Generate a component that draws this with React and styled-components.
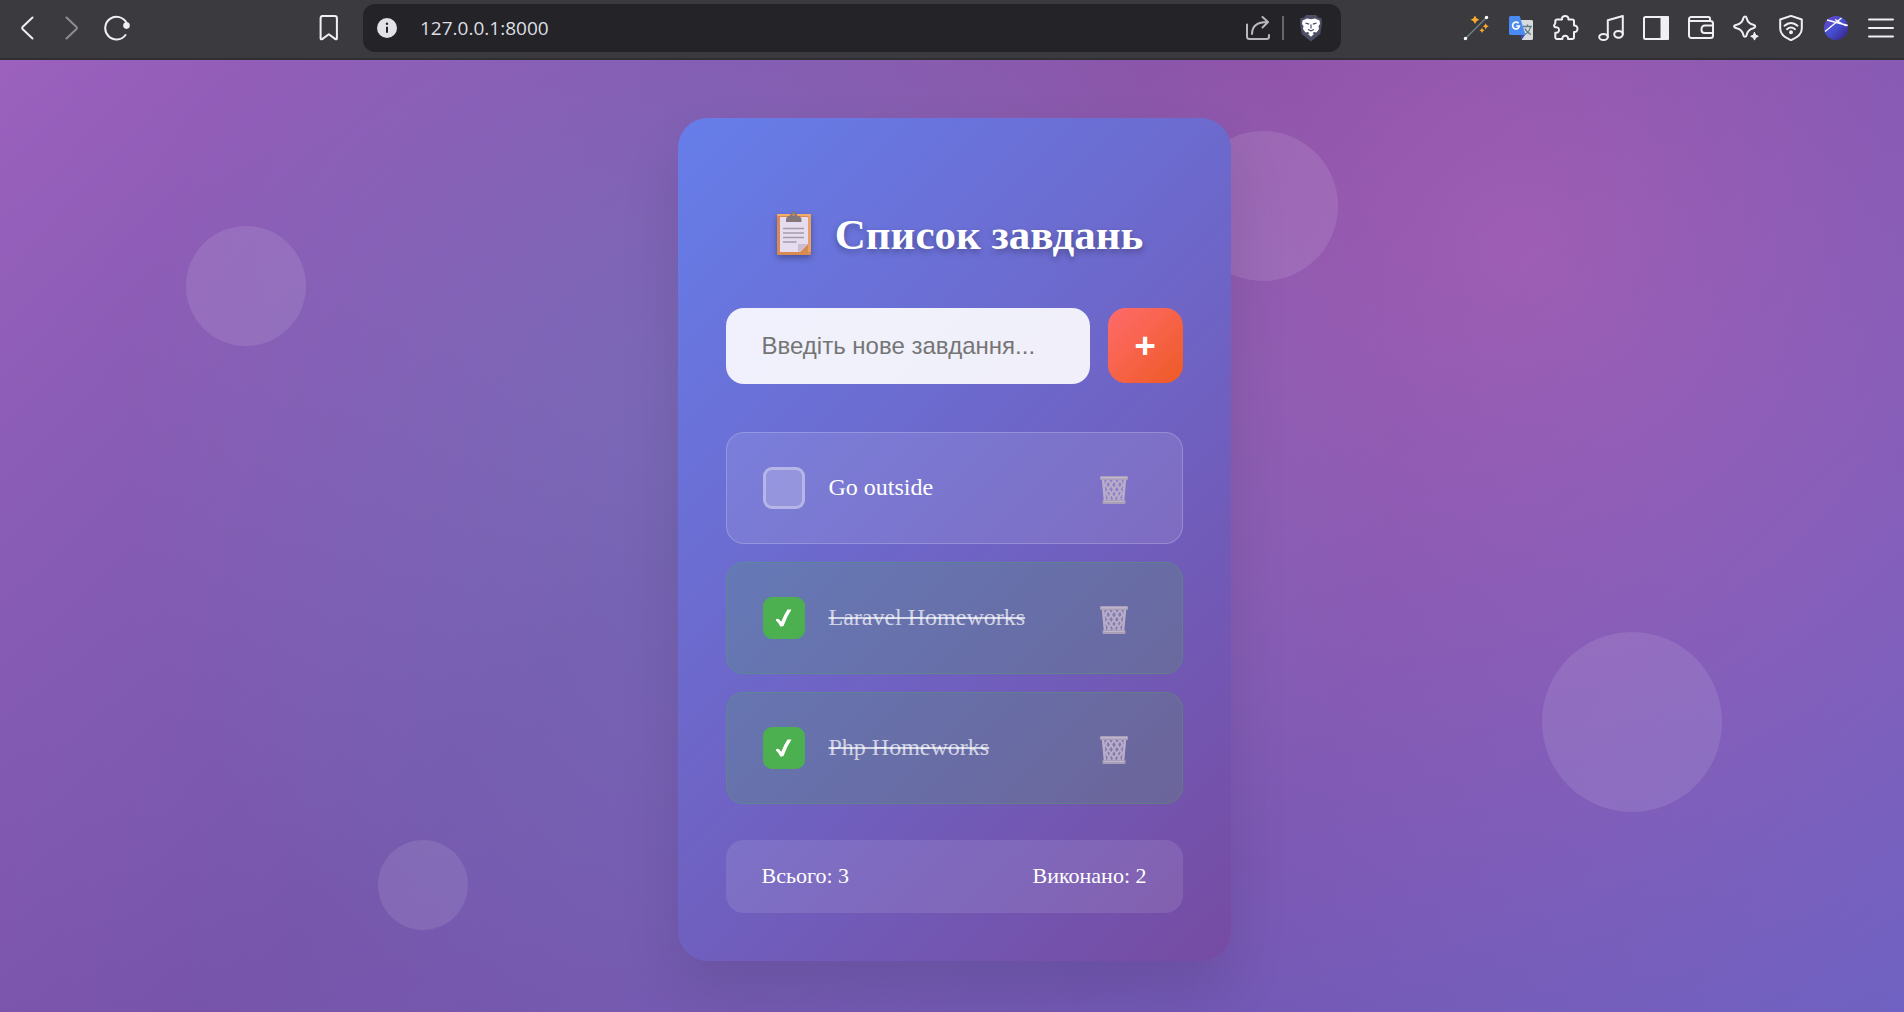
import React, { useState } from "react";
import styled, { createGlobalStyle, css } from "styled-components";

const GlobalStyle = createGlobalStyle`
  *, *::before, *::after { box-sizing: border-box; }
  body {
    margin: 0;
    font-family: "Liberation Serif", "Times New Roman", serif;
    background: #764ba2;
  }
`;

const Window = styled.div`
  display: flex;
  flex-direction: column;
  min-height: 100vh;
`;

/* ---------- browser bar ---------- */

const Toolbar = styled.header`
  display: flex;
  align-items: center;
  height: 60px;
  padding: 0 1px 2px 4px;
  background: #3b3a3f;
  border-bottom: 2px solid #2f2e32;
  position: relative;
  z-index: 1;
`;

const ToolGroup = styled.div`
  display: flex;
  align-items: center;
`;

const ToolButton = styled.button`
  display: flex;
  align-items: center;
  justify-content: center;
  width: 45px;
  height: 48px;
  padding: 0;
  border: 0;
  background: none;
  color: #f0f0f4;
  opacity: ${(p) => (p.disabled ? 0.45 : 1)};
`;

const BookmarkSlot = styled(ToolGroup)`
  margin: 0 12px 0 167px;
`;

const AddressBar = styled.div`
  flex: 1;
  min-width: 0;
  display: flex;
  align-items: center;
  height: 48px;
  margin-right: 112px;
  padding: 0 8px 0 14px;
  border-radius: 12px;
  background: #242428;
`;

const AddressInput = styled.input`
  flex: 1;
  min-width: 0;
  margin-left: 23px;
  padding: 0;
  border: 0;
  outline: 0;
  background: none;
  color: #dedee2;
  font: 19px/26px "Open Sans", "Noto Sans", sans-serif;
`;

const Divider = styled.span`
  width: 2px;
  height: 24px;
  margin: 0 4px 0 2px;
  background: #66666b;
`;

/* ---------- page ---------- */

const Stage = styled.main`
  position: relative;
  flex: 1;
  display: flex;
  justify-content: center;
  align-items: flex-start;
  padding: 58px 20px 51px 24px;
  overflow: hidden;
  background:
    radial-gradient(circle at 20% 80%, rgba(120, 119, 198, 0.3) 0%, transparent 50%),
    radial-gradient(circle at 80% 20%, rgba(255, 119, 198, 0.3) 0%, transparent 50%),
    radial-gradient(circle at 40% 40%, rgba(120, 219, 255, 0.2) 0%, transparent 50%),
    linear-gradient(-45deg, #667eea, #764ba2, #f093fb, #f5576c) 88% 50% / 400% 400%;
`;

const Bubble = styled.span`
  position: absolute;
  left: ${(p) => p.$left};
  top: ${(p) => p.$top}px;
  width: ${(p) => p.$size}px;
  height: ${(p) => p.$size}px;
  border-radius: 50%;
  background: rgba(255, 255, 255, 0.1);
`;

const Card = styled.section`
  position: relative;
  width: 100%;
  max-width: 553px;
  padding: 48px;
  border-radius: 30px;
  background: linear-gradient(135deg, #667eea 0%, #764ba2 100%);
  box-shadow: 0 30px 60px rgba(0, 0, 0, 0.1);
`;

const Title = styled.h1`
  display: flex;
  align-items: center;
  justify-content: center;
  gap: 24px;
  margin: 42px 0 46px;
  color: #fff;
  font-size: 43px;
  line-height: 54px;
  text-shadow: 0 3px 6px rgba(0, 0, 0, 0.3);

  svg {
    margin: 0 0 4px 12px;
    filter: drop-shadow(0 3px 3px rgba(0, 0, 0, 0.3));
  }
`;

const AddForm = styled.form`
  display: flex;
  align-items: flex-start;
  gap: 18px;
  margin-bottom: 48px;
`;

const TaskInput = styled.input`
  flex: 1;
  min-width: 0;
  height: 76px;
  padding: 0 36px;
  border: 0;
  border-radius: 18px;
  background: rgba(255, 255, 255, 0.9);
  color: #333;
  font: 24px/28px "Liberation Sans", Arial, sans-serif;

  &::placeholder { color: #757575; opacity: 1; }
`;

const AddButton = styled.button`
  width: 75px;
  height: 75px;
  padding: 0 0 4px;
  border: 0;
  border-radius: 18px;
  background: linear-gradient(135deg, #ff6b6b, #ee5a24);
  color: #fff;
  font: 700 38px/40px "Open Sans", sans-serif;
`;

const TaskList = styled.ul`
  display: flex;
  flex-direction: column;
  gap: 18px;
  margin: 0 0 36px;
  padding: 0;
  list-style: none;
`;

const TaskRow = styled.li`
  display: flex;
  align-items: center;
  height: 112px;
  padding: 0 36px;
  border: 1px solid rgba(255, 255, 255, 0.2);
  border-radius: 18px;
  background: rgba(255, 255, 255, 0.1);

  ${(p) =>
    p.$done &&
    css`
      background: rgba(76, 175, 80, 0.2);
      border-color: rgba(76, 175, 80, 0.3);
    `}
`;

const Check = styled.input`
  appearance: none;
  display: grid;
  place-items: center;
  flex: none;
  width: 42px;
  height: 42px;
  margin: 0 24px 0 0;
  border: 3px solid rgba(255, 255, 255, 0.3);
  border-radius: 9px;
  background: rgba(255, 255, 255, 0.2);

  &:checked {
    border-color: #4caf50;
    background: #4caf50;
  }

  &:checked::after {
    content: "";
    width: 16px;
    height: 18px;
    background: #fff;
    clip-path: path("M0 11 Q1.500 9 3.500 10.200 L5.800 12.800 Q8.500 5.500 12 .5 L16 .5 Q11 8 8 17 L5 17.800 Q3 13.500 0 11 Z");
  }
`;

const TaskLabel = styled.label`
  flex: 1;
  min-width: 0;
  padding-bottom: 2px;
  color: ${(p) => (p.$done ? "rgba(255, 255, 255, 0.7)" : "#fff")};
  font-size: 24px;
  line-height: 28px;
  text-decoration: ${(p) => (p.$done ? "line-through" : "none")};
`;

const DeleteButton = styled.button`
  display: flex;
  align-items: center;
  justify-content: center;
  width: 64px;
  height: 64px;
  padding: 2px 0 0;
  border: 0;
  background: none;
`;

const Stats = styled.footer`
  display: flex;
  justify-content: space-between;
  padding: 23px 36px 25px;
  border-radius: 18px;
  background: rgba(255, 255, 255, 0.1);
  color: #fff;
  font-size: 22px;
  line-height: 25px;
`;

/* ---------- drawings ---------- */

const Icon = ({ size = 26, sw = 2, children }) => (
  <svg
    width={size}
    height={size}
    viewBox="0 0 26 26"
    fill="none"
    stroke="currentColor"
    strokeWidth={sw}
    strokeLinecap="round"
    strokeLinejoin="round"
    aria-hidden="true"
  >
    {children}
  </svg>
);

const BackIcon = () => <Icon><path d="M18.500 2.500 8.500 12Q7.800 13 8.500 14L18.500 23.500" /></Icon>;
const ForwardIcon = () => <Icon><path d="M7.500 2.500 17.500 12Q18.200 13 17.500 14L7.500 23.500" /></Icon>;
const ReloadIcon = () => (
  <Icon>
    <path d="M21.500 20A11.300 11.300 0 1 1 22.600 8" />
    <circle cx="22.500" cy="10.600" r="2.300" fill="currentColor" />
  </Icon>
);
const BookmarkIcon = () => (
  <Icon><path d="M6.500 1h12.200a2.200 2.200 0 0 1 2.200 2.200V23.500q-.3 1.300-1.500.6L12.800 19.200 6.200 24.100q-1.300.7-1.600-.6V3.200A2.200 2.200 0 0 1 6.500 1z" /></Icon>
);
const InfoIcon = () => (
  <svg width="20" height="20" viewBox="0 0 20 20" aria-hidden="true">
    <circle cx="10" cy="10" r="10" fill="#e2e2e8" />
    <circle cx="10" cy="5.800" r="1.200" fill="#242428" />
    <path d="M10 8.700v6" stroke="#242428" strokeWidth="2" />
  </svg>
);
const ShareIcon = () => (
  <Icon>
    <g stroke="#b9b9bd">
      <path d="M2 9.500v12a2.500 2.500 0 0 0 2.500 2.500h17A2.500 2.500 0 0 0 24 21.500v-1.500" />
      <path d="M7 19C7 11.500 11 7 22.500 7M17.500 2l5.500 5-5.500 5.500" />
    </g>
  </Icon>
);
const LionIcon = () => (
  <svg width="24" height="28" viewBox="0 0 24 28" aria-hidden="true">
    <path d="M7 1h10l2 2.400L22.500 4 23 9l-1.700 11L12 27.500 2.700 20 1 9l.5-5L5 3.400z" fill="#4c4e66" />
    <path d="M3.500 6.500 8 4.500l4 .8 4-.8 4.500 2 .5 3.500-1.500 2 .5 3-2.500 3.500-2.500-.5L12 20.500 9 18l-2.500.5L4 15l.5-3L3 10z" fill="#fff" />
    <path d="M6.500 9.200l3.700.9M17.500 9.200l-3.700.9M12 10.500v4M9 15.500l3 1.300 3-1.300" stroke="#4c4e66" strokeWidth="1.200" fill="none" />
    <path d="M12 18.500l3 1.500-3 2.800L9 20z" fill="#fff" />
  </svg>
);
const WandIcon = () => (
  <svg width="26" height="26" viewBox="0 0 26 26" aria-hidden="true">
    <path d="M2.500 23.500 23.500 2.500" stroke="#6d868c" strokeWidth="1.300" />
    <circle cx="2.500" cy="23.500" r="1.700" fill="#fff" />
    <circle cx="23.500" cy="2.500" r="1.700" fill="#fff" />
    <path d="M12 .5l1.500 2.800 2.800 1.500-2.800 1.500L12 9.100l-1.500-2.800-2.800-1.500 2.800-1.500zM22.700 8.200l1 2.100 2.100 1-2.100 1-1 2.100-1-2.100-2.100-1 2.100-1zM19 12.700l.9 1.700 1.700.9-1.700.9L19 17.900l-.9-1.700-1.700-.9 1.700-.9z" fill="#fbab2d" />
  </svg>
);
const TranslateIcon = () => (
  <svg width="26" height="26" viewBox="0 0 26 26" aria-hidden="true">
    <path d="M11 5h12.500A1.500 1.500 0 0 1 25 6.500v17a1.500 1.500 0 0 1-1.500 1.500H14z" fill="#d9dadc" />
    <path d="M15 11.500h9M19.500 9.500v2M22.500 11.500c-.7 4-3 6.500-5.500 8M17 13.500c1 2.500 3 4.500 6 6" stroke="#5f7d88" strokeWidth="1.300" fill="none" />
    <path d="M13 20h4l-3.500 5z" fill="#3447b8" />
    <path d="M2.500 1h9.200l5.800 19H2.500A1.500 1.500 0 0 1 1 18.500v-16A1.500 1.500 0 0 1 2.500 1z" fill="#4a8af0" />
    <path d="M10.600 8.300A3.400 3.400 0 1 0 11.400 11H8.200" stroke="#fff" strokeWidth="1.700" fill="none" />
  </svg>
);
const PuzzleIcon = () => (
  <Icon>
    <path d="M4 4.500h5C8.500 2.500 10 1 12.200 1s3.600 1.500 3.200 3.500h3.900a1.700 1.700 0 0 1 1.700 1.700v4.300c2-.3 3.500 1.200 3.500 3.200s-1.500 3.500-3.500 3.200v5.400a1.700 1.700 0 0 1-1.700 1.700h-4.300c.3-2-.9-3.300-2.800-3.300S9.200 22 9.500 24H4a1.700 1.700 0 0 1-1.700-1.700v-4.600c2.200.3 3.700-.7 3.700-2.700s-1.500-3-3.700-2.700a1.500 1.500 0 0 1-1-2.200l1-2V6.200A1.700 1.700 0 0 1 4 4.500z" />
  </Icon>
);
const MusicIcon = () => (
  <Icon>
    <ellipse cx="5.500" cy="22" rx="4.300" ry="3" />
    <ellipse cx="20.500" cy="19.300" rx="4.300" ry="3.400" />
    <path d="M9.800 22V5.300L24.800 1v18" />
  </Icon>
);
const PanelIcon = () => (
  <Icon>
    <rect x="1" y="2" width="24" height="22" rx="1.500" />
    <path d="M18.500 2H25v22h-6.500z" fill="currentColor" />
  </Icon>
);
const WalletIcon = () => (
  <Icon>
    <path d="M22 6V3.500A1.500 1.500 0 0 0 20.500 2H3.500A2.300 2.300 0 0 0 1 4.200V20.500A2.500 2.500 0 0 0 3.500 23H22.500A2.500 2.500 0 0 0 25 20.500V8.500A2.500 2.500 0 0 0 22.500 6H3.500A2 2 0 0 1 1 4.200M25 10.500h-8a3.500 3.500 0 0 0-3.500 3.500v1A3 3 0 0 0 16.500 18H25" />
  </Icon>
);
const SparkleIcon = () => (
  <Icon>
    <path d="M12 1.500c1.200 0 1.500.8 1.700 1.700.8 4 2.300 5.500 6.600 6.600 2.600.8 2.600 2.600 0 3.400-4.300 1.100-5.800 2.600-6.600 6.600-.4 2.600-3 2.600-3.400 0-.8-4-2.300-5.500-6.600-6.600-3.500-.9-3.500-2.600 0-3.400C8 8.700 9.500 7.200 10.300 3.200c.2-.9.5-1.700 1.700-1.700z" />
    <path d="M21.500 17.500l1.200 2.600 2.600 1.200-2.600 1.200-1.200 2.600-1.200-2.600-2.600-1.200 2.600-1.200z" fill="currentColor" strokeWidth="1" />
  </Icon>
);
const VpnIcon = () => (
  <Icon>
    <path d="M13 .9 23.800 4.500v9.300c0 5-5 9-10.800 11.400C7.200 22.800 2.200 18.800 2.200 13.800V4.500z" />
    <path d="M6.500 10.700c4-3.500 9-3.500 13 0M9 14.200c2.500-2.200 5.500-2.200 8 0" />
    <circle cx="13" cy="17.300" r="1" fill="currentColor" />
  </Icon>
);
const BallIcon = () => (
  <svg width="26" height="26" viewBox="0 0 26 26" aria-hidden="true">
    <defs>
      <linearGradient id="ball" x1="0" y1="0" x2="1" y2="1">
        <stop offset="0" stopColor="#6b45d0" />
        <stop offset=".5" stopColor="#4450d0" />
        <stop offset="1" stopColor="#3a1a80" />
      </linearGradient>
    </defs>
    <circle cx="13" cy="13" r="12" fill="url(#ball)" />
    <path d="M4 5 24.800 10.500M2 16.500 18.500 3M12 4.500l11 6.500" stroke="#fff" strokeWidth="1.300" />
  </svg>
);
const MenuIcon = () => <Icon><path d="M1 4.500h24M1 13h24M1 21.500h24" /></Icon>;

const ClipboardIcon = () => (
  <svg width="34" height="43" viewBox="0 0 34 43" aria-hidden="true">
    <rect x="0" y="2" width="34" height="41" rx="1.500" fill="#d98a52" />
    <path d="M31 4h3v36h-3z" fill="#e9a066" />
    <rect x="0" y="2" width="34" height="2" rx="1" fill="#f3ad6a" />
    <path d="M3 5h28v27l-8 8H3z" fill="#e6dcf0" />
    <path d="M21 32h10l-9 8h-1z" fill="#c9bcd4" />
    <path d="M9 10V7.500C9 5 11 4 13 3.500 13.500 1 15 0 16.500 0S19.500 1 20 3.500C22 4 24.500 5 24.500 7.500V10z" fill="#83787e" />
    <circle cx="16.500" cy="2.800" r="1.200" fill="#d98a52" />
    <path d="M6 16.500h21M6 21h21M6 25.500h21M6 30h13.500" stroke="#a39ca8" strokeWidth="1.400" />
  </svg>
);

const TrashIcon = () => (
  <svg width="28" height="29" viewBox="0 0 28 29" fill="none" aria-hidden="true">
    <path d="M2 4h24l-2 22H4z" fill="#b9adca" fillOpacity=".3" />
    <path d="M3 4l2 22M25 4l-2 22" stroke="#b9adca" strokeWidth="2.500" />
    <path
      d="M7.500 4l13 21M13.500 4l9 15M19.500 4l4 7M5 9l10 16M5.500 17l5 8M20.500 4l-13 21M14.500 4l-9 15M8.500 4l-4 7M23 9L13 25M22.500 17l-5 8"
      stroke="#b9adca"
      strokeWidth="2"
    />
    <rect x="0" y="1" width="28" height="4" rx="1" fill="#aa9fb8" />
    <rect x="1" y="2" width="26" height="1.500" fill="#c0b5ce" />
    <rect x="2.500" y="25" width="23" height="4" rx="1" fill="#aa9fb8" />
    <rect x="4" y="26" width="20" height="1" fill="#c0b5ce" />
  </svg>
);

/* ---------- data ---------- */

const extensions = [
  ["Magic wand", WandIcon],
  ["Translate", TranslateIcon],
  ["Extensions", PuzzleIcon],
  ["Media", MusicIcon],
  ["Side panel", PanelIcon],
  ["Wallet", WalletIcon],
  ["Assistant", SparkleIcon],
  ["VPN", VpnIcon],
  ["Profile", BallIcon],
  ["Menu", MenuIcon],
];

const bubbles = [
  { left: "calc(10% - 4px)", top: 166, size: 120 },
  { left: "81%", top: 572, size: 180 },
  { left: "calc(62% + 8px)", top: 71, size: 150 },
  { left: "calc(20% - 3px)", top: 780, size: 90 },
];

const initialTasks = [
  { id: 1, title: "Go outside", done: false },
  { id: 2, title: "Laravel Homeworks", done: true },
  { id: 3, title: "Php Homeworks", done: true },
];

function BrowserBar() {
  return (
    <Toolbar>
      <ToolGroup>
        <ToolButton aria-label="Back"><BackIcon /></ToolButton>
        <ToolButton aria-label="Forward" disabled><ForwardIcon /></ToolButton>
        <ToolButton aria-label="Reload"><ReloadIcon /></ToolButton>
      </ToolGroup>
      <BookmarkSlot>
        <ToolButton aria-label="Bookmark"><BookmarkIcon /></ToolButton>
      </BookmarkSlot>
      <AddressBar>
        <InfoIcon />
        <AddressInput aria-label="Address" defaultValue="127.0.0.1:8000" />
        <ToolButton aria-label="Share"><ShareIcon /></ToolButton>
        <Divider />
        <ToolButton aria-label="Shields"><LionIcon /></ToolButton>
      </AddressBar>
      <ToolGroup>
        {extensions.map(([name, Glyph]) => (
          <ToolButton key={name} aria-label={name}><Glyph /></ToolButton>
        ))}
      </ToolGroup>
    </Toolbar>
  );
}

export default function App() {
  const [tasks, setTasks] = useState(initialTasks);
  const [draft, setDraft] = useState("");

  const add = (e) => {
    e.preventDefault();
    if (!draft.trim()) return;
    setTasks([...tasks, { id: Date.now(), title: draft.trim(), done: false }]);
    setDraft("");
  };
  const toggle = (id) =>
    setTasks(tasks.map((t) => (t.id === id ? { ...t, done: !t.done } : t)));
  const remove = (id) => setTasks(tasks.filter((t) => t.id !== id));

  return (
    <Window>
      <GlobalStyle />
      <BrowserBar />
      <Stage>
        {bubbles.map((b) => (
          <Bubble key={b.left} $left={b.left} $top={b.top} $size={b.size} />
        ))}
        <Card>
          <Title>
            <ClipboardIcon />
            <span>Список завдань</span>
          </Title>
          <AddForm onSubmit={add}>
            <TaskInput
              aria-label="Нове завдання"
              placeholder="Введіть нове завдання..."
              value={draft}
              onChange={(e) => setDraft(e.target.value)}
            />
            <AddButton type="submit">+</AddButton>
          </AddForm>
          <TaskList>
            {tasks.map((t) => (
              <TaskRow key={t.id} $done={t.done}>
                <Check
                  type="checkbox"
                  id={`task-${t.id}`}
                  checked={t.done}
                  onChange={() => toggle(t.id)}
                />
                <TaskLabel htmlFor={`task-${t.id}`} $done={t.done}>{t.title}</TaskLabel>
                <DeleteButton aria-label="Видалити" onClick={() => remove(t.id)}>
                  <TrashIcon />
                </DeleteButton>
              </TaskRow>
            ))}
          </TaskList>
          <Stats>
            <span>Всього: {tasks.length}</span>
            <span>Виконано: {tasks.filter((t) => t.done).length}</span>
          </Stats>
        </Card>
      </Stage>
    </Window>
  );
}
